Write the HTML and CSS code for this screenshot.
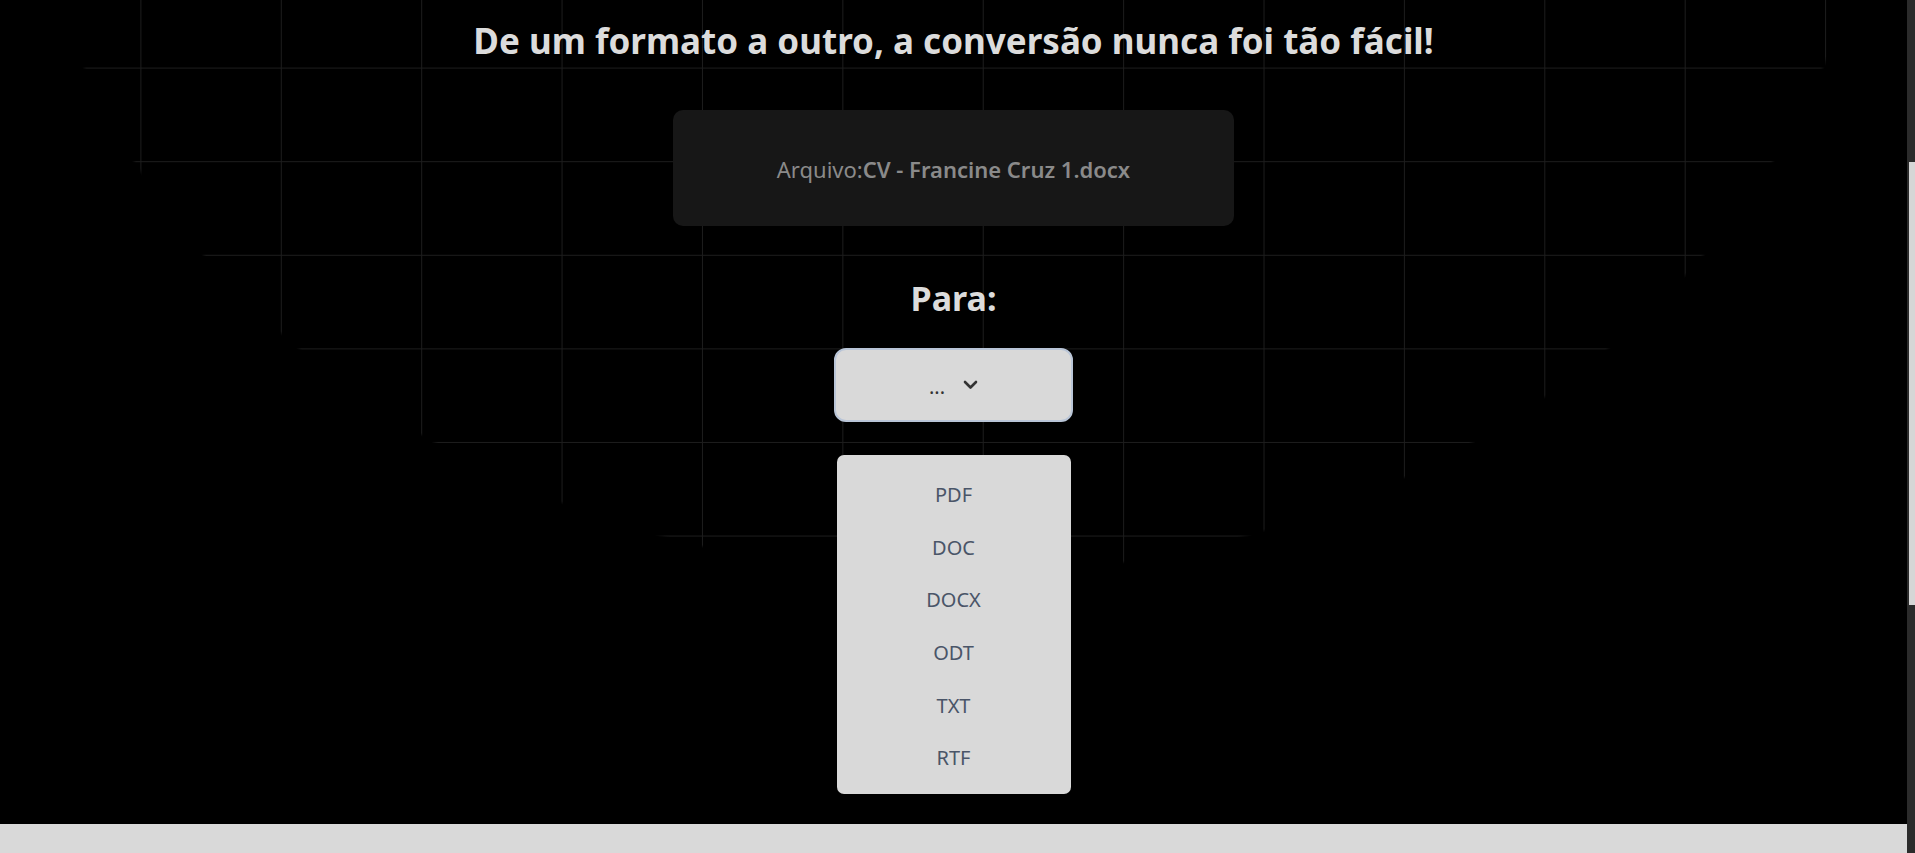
FILE: index.html
```html
<!DOCTYPE html>
<html lang="pt-BR">
<head>
<meta charset="utf-8">
<title>Conversor</title>
<link rel="stylesheet" href="styles.css">
</head>
<body>
  <div class="page">
    <main class="stage">
      <h1 class="title">De um formato a outro, a conversão nunca foi tão fácil!</h1>
      <div class="file-box">
        <p class="file-text">Arquivo:<strong>CV - Francine Cruz 1.docx</strong></p>
      </div>
      <h2 class="para">Para:</h2>
      <button class="select" type="button">
        <span class="dots">...</span>
        <svg class="chevron" width="15" height="10" viewBox="0 0 15 10" aria-hidden="true">
          <polyline points="2,2 7.5,7.5 13,2" fill="none" stroke="#333" stroke-width="2.6" stroke-linecap="round" stroke-linejoin="round"/>
        </svg>
      </button>
      <ul class="menu">
        <li class="menu-item">PDF</li>
        <li class="menu-item">DOC</li>
        <li class="menu-item">DOCX</li>
        <li class="menu-item">ODT</li>
        <li class="menu-item">TXT</li>
        <li class="menu-item">RTF</li>
      </ul>
    </main>
    <footer class="band"></footer>
  </div>
  <div class="scrollbar"><div class="thumb"></div></div>
</body>
</html>
```
FILE: styles.css
```css
* { box-sizing: border-box; }

html, body {
  margin: 0;
  padding: 0;
  height: 853px;
  overflow: hidden;
  background: #000;
}

body {
  display: flex;
  font-family: "Noto Sans", "Open Sans", sans-serif;
}

.page {
  flex: 1;
  display: flex;
  flex-direction: column;
  height: 853px;
}

.stage {
  flex: 1;
  display: flex;
  flex-direction: column;
  align-items: center;
  padding-top: 23px;
  overflow: hidden;
  background:
    radial-gradient(ellipse 928px 777px at 50% -200px, transparent 99.6%, #000 100%),
    linear-gradient(to right, #1d1d1d 1px, transparent 1px) 0 0 / 140.4px 93.6px,
    linear-gradient(to bottom, #1d1d1d 1px, transparent 1px) 0 -26px / 140.4px 93.6px,
    #000;
}

.title {
  margin: 0;
  font-size: 35px;
  line-height: 35px;
  font-weight: 700;
  color: #dcdcdc;
}

.file-box {
  margin-top: 52px;
  width: 561px;
  height: 116px;
  padding-top: 2px;
  background: #171717;
  border-radius: 10px;
  display: flex;
  align-items: center;
  justify-content: center;
}

.file-text {
  margin: 0;
  font-size: 22px;
  line-height: 22px;
  color: #8a8a8a;
}

.file-text strong {
  font-weight: 600;
}

.para {
  margin: 55px 0 0;
  font-size: 34px;
  line-height: 34px;
  font-weight: 700;
  color: #dcdcdc;
}

.select {
  margin-top: 33px;
  width: 239px;
  height: 74px;
  background: #d9d9d9;
  border: 2px solid #b9c5d7;
  border-radius: 12px;
  display: flex;
  align-items: center;
  justify-content: center;
  gap: 18px;
  padding: 0;
  font-family: inherit;
}

.dots {
  font-size: 20px;
  line-height: 20px;
  padding-top: 4px;
  color: #333;
}

.chevron {
  display: block;
}

.menu {
  list-style: none;
  margin: 33px 0 0;
  padding: 13px 0 10px;
  width: 234px;
  height: 339px;
  background: #d9d9d9;
  border-radius: 7px;
}

.menu-item {
  height: 52.7px;
  display: flex;
  align-items: center;
  justify-content: center;
  font-size: 20px;
  color: #4a5568;
}

.band {
  height: 29px;
  background: #d9d9d9;
}

.scrollbar {
  width: 8px;
  height: 853px;
  background: #2b2b2b;
  padding: 162px 0 0 2px;
}

.thumb {
  height: 443px;
  background: #d6d6d6;
}
```
